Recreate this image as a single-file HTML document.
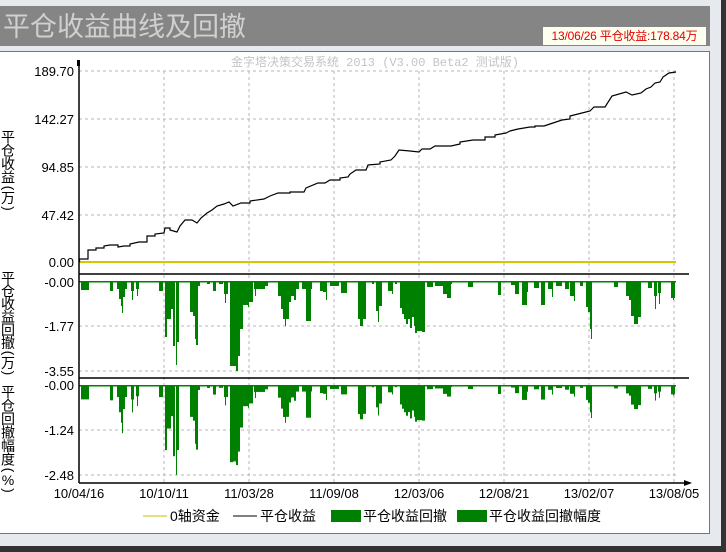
<!DOCTYPE html>
<html><head><meta charset="utf-8"><style>
body{margin:0;width:726px;height:552px;overflow:hidden;background:#e6eaee;position:relative;font-family:"Liberation Sans","Noto Sans CJK SC",sans-serif}
#tb{position:absolute;left:0;top:6px;width:710px;height:40px;background:#858585}
#tt{position:absolute;left:3px;top:5px;font-size:27px;color:#d0d0d0;font-family:"Noto Sans CJK SC",sans-serif;white-space:nowrap}
#rb{position:absolute;left:543px;top:27px;width:163px;height:18px;background:#fffff0;color:#e00000;font-size:12px;line-height:18px;text-align:center;white-space:nowrap;letter-spacing:-0.2px}
#pn{position:absolute;left:0;top:51px;width:709px;height:481px;background:#fff;border-right:1px solid #777;border-bottom:1px solid #777;border-top:1px solid #777}
#dk{position:absolute;left:721px;top:0;width:5px;height:552px;background:#333}
#db{position:absolute;left:0;top:546px;width:726px;height:6px;background:#333}
svg{position:absolute;left:0;top:0}
</style></head><body>
<div id="tb"></div><div id="tt">平仓收益曲线及回撤</div>
<div id="rb">13/06/26 平仓收益:178.84万</div>
<div id="pn"></div><div id="dk"></div><div id="db"></div>
<svg id="s" width="726" height="552" font-family="Liberation Sans, Noto Sans CJK SC, sans-serif" font-size="13">
<text x="375" y="66" text-anchor="middle" fill="#c4c4c4" font-size="12" font-family="Liberation Mono, Noto Sans CJK SC, monospace">金字塔决策交易系统 2013 (V3.00 Beta2 测试版)</text>
<g id="grid" stroke="#c0b0c0" stroke-dasharray="3,3" stroke-width="1"></g>
<g id="bars" fill="#008000"></g>
<line x1="79" y1="262" x2="676" y2="262" stroke="#d0c800" stroke-width="2"/>
<polyline fill="none" stroke="#000" stroke-width="1.2" points="79.5,262 79.5,259 88,259 88,250 96,250 96,248 104,248 104,246 110,245 118,245 118,247 124,246 130,246 130,244 139,242 147,242 147,236 155,236 155,234 164,233 165,228 170,228 170,230 177,232 180,226 185,220 192,220 197,223 201,218 207,213 212,210 217,206 224,204 229,202 233,206 241,203 250,203 250,201 264,199 270,196 278,193 290,193 290,192 304,192 306,188 318,183 325,183 330,180 340,180 340,178 348,177 350,174 356,170 366,170 368,165 380,164 380,162 391,160 395,156 399,150 410,151 419,152 422,149 430,149 435,146 451,146 460,144 460,142 473,140 485,140 485,137 495,137 495,135 506,133 510,131 518,129 530,127 535,127 535,126 544,126 550,124 562,120 570,119 570,116 582,113 590,111 594,107 605,107 612,96 626,92 632,95 641,93 646,89 651,87 655,83 660,82 663,77 669,73 676,72"/>
<g stroke="#000" stroke-width="1.5">
<line x1="79" y1="62" x2="79" y2="483"/><line x1="79" y1="274" x2="689" y2="274"/><line x1="79" y1="378" x2="689" y2="378"/><line x1="79" y1="483" x2="690" y2="483"/>
</g>
<rect x="77" y="60" width="3" height="6" fill="#000"/>
<polygon points="684,480 692,483 684,486" fill="#000"/>
<g text-anchor="end" fill="#000">
<text x="74" y="76">189.70</text><text x="74" y="124">142.27</text><text x="74" y="172">94.85</text><text x="74" y="220">47.42</text><text x="74" y="267">0.00</text>
<text x="74" y="287">-0.00</text><text x="74" y="331">-1.77</text><text x="74" y="376">-3.55</text>
<text x="74" y="390">-0.00</text><text x="74" y="435">-1.24</text><text x="74" y="480">-2.48</text>
</g>
<g text-anchor="middle" fill="#000">
<text x="79" y="498">10/04/16</text><text x="164" y="498">10/10/11</text><text x="249" y="498">11/03/28</text><text x="334" y="498">11/09/08</text><text x="419" y="498">12/03/06</text><text x="504" y="498">12/08/21</text><text x="589" y="498">13/02/07</text><text x="674" y="498">13/08/05</text>
</g>
<g font-size="14" fill="#000" id="vt"></g>
<g font-size="14" fill="#000">
<line x1="143" y1="516" x2="167" y2="516" stroke="#c8c000"/><text x="170" y="521">0轴资金</text>
<line x1="233" y1="516" x2="257" y2="516" stroke="#000"/><text x="260" y="521">平仓收益</text>
<rect x="331" y="510" width="30" height="12" fill="#008000"/><text x="363" y="521">平仓收益回撤</text>
<rect x="457" y="510" width="30" height="12" fill="#008000"/><text x="489" y="521">平仓收益回撤幅度</text>
</g>
</svg>
<script>
var NS="http://www.w3.org/2000/svg";
function el(p,t,a){var e=document.createElementNS(NS,t);for(var k in a)e.setAttribute(k,a[k]);p.appendChild(e);return e;}
var g=document.getElementById('grid');
[164,249,334,419,504,589,674].forEach(function(x){el(g,'line',{x1:x,y1:71,x2:x,y2:483});});
[71,119,167,215,326,371,430,475].forEach(function(y){el(g,'line',{x1:79,y1:y,x2:676,y2:y});});
var B=[[81,89,9],[110,113,10],[117,119,8],[119,121,18],[121,123,25],[122,123,32],[123,125,16],[125,127,8],[131,134,10],[132,133,19],[136,139,8],[137,138,15],[159,163,10],[165,167,56],[167,171,38],[171,173,28],[173,175,65],[176,177,84],[177,179,61],[190,193,31],[193,195,35],[195,196,58],[196,198,64],[198,200,5],[207,210,3],[213,216,10],[219,223,3],[224,228,13],[225,226,22],[230,233,85],[233,236,85],[236,238,90],[238,240,75],[240,243,48],[243,248,24],[248,249,26],[249,253,21],[254,258,8],[255,256,15],[258,265,8],[265,268,5],[278,281,15],[281,283,28],[283,285,38],[285,286,45],[286,289,38],[289,291,21],[291,294,15],[294,296,19],[296,299,8],[302,306,8],[306,311,40],[311,312,8],[320,323,10],[323,326,11],[326,327,19],[330,339,5],[341,347,12],[358,360,38],[360,363,45],[363,366,38],[372,374,3],[376,378,30],[378,379,41],[379,382,25],[380,382,23],[388,393,10],[392,393,13],[395,397,3],[400,402,27],[402,404,33],[404,406,38],[406,408,43],[408,410,38],[410,412,47],[412,414,36],[414,416,45],[415,417,52],[417,422,50],[422,425,51],[427,433,6],[435,443,5],[443,447,13],[447,451,17],[451,452,3],[468,473,6],[498,501,14],[511,515,4],[515,519,13],[522,527,24],[527,528,11],[534,539,7],[541,545,24],[548,553,8],[552,553,16],[556,562,5],[565,569,8],[570,575,15],[574,575,20],[580,583,5],[586,588,26],[588,590,31],[590,591,48],[591,592,58],[614,618,6],[626,629,15],[629,631,19],[631,634,35],[634,638,43],[638,641,36],[648,652,7],[654,657,15],[655,656,28],[658,661,12],[659,660,23],[671,675,17],[673,674,19]];
var F=[[80,1.6],[125,1.5],[176,1.07],[236,0.89],[420,0.7],[590,0.57],[676,0.55]];
function f(x){for(var i=1;i<F.length;i++){if(x<=F[i][0]){var a=F[i-1],b=F[i];return a[1]+(b[1]-a[1])*(x-a[0])/(b[0]-a[0]);}}return 0.55;}
var bg=document.getElementById('bars');
el(bg,'rect',{x:79,y:281,width:597,height:1.5});el(bg,'rect',{x:79,y:385,width:597,height:1.5});
B.forEach(function(b){el(bg,'rect',{x:b[0],y:281,width:b[1]-b[0],height:b[2]});var d=Math.min(90,b[2]*f(b[0]));el(bg,'rect',{x:b[0],y:385,width:b[1]-b[0],height:d});});
var vt=document.getElementById('vt');
function col(s,y0,sp){var y=y0;for(var i=0;i<s.length;i++){var c=s[i];var p=(c=='('||c==')');
 var t=el(vt,'text',{x:8,y:p?y-4:y,'text-anchor':'middle'});
 if(p){t.setAttribute('transform','rotate(90 8 '+(y-8)+')');t.setAttribute('x',8);t.setAttribute('y',y-4);}
 t.textContent=c;y+=p?7:sp;}}
col("平仓收益(万)",142,13.5);col("平仓收益回撤(万)",283,13);col("平仓回撤幅度(%)",397,13.5);
</script>
</body></html>
